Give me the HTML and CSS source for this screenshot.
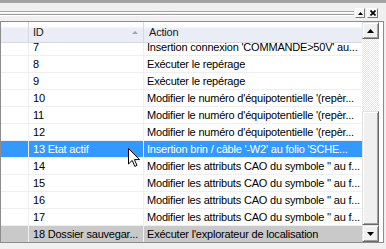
FILE: index.html
```html
<!DOCTYPE html>
<html lang="fr">

<head>
  <meta charset="UTF-8">
  <title>Historique</title>
  <link rel="stylesheet" href="styles.css">
</head>

<body>
  <div class="panel">
    <div class="topline"></div>
    <div class="toolbar">
      <div class="grip"></div>
      <span class="tbtn"><svg width="5" height="3" viewBox="0 0 5 3"><path d="M0 3h5L2.5 0z" fill="#000"/></svg></span>
      <span class="tbtn close"><svg width="6" height="6" viewBox="0 0 6 6"><path d="M0.5 0.5l5 5M5.5 0.5l-5 5" stroke="#000" stroke-width="1.6"/></svg></span>
    </div>
    <div class="list">
      <div class="grid">
        <div class="row head">
          <div class="c-num"></div>
          <div class="c-id">ID <svg class="sort" width="6" height="3" viewBox="0 0 6 3"><path d="M0 3h6L3 0z" fill="#9aa3b8"/></svg></div>
          <div class="c-action">Action</div>
        </div>
        <div class="body">
          <div class="rows">
            <div class="row"><div class="c-num"></div><div class="c-id">7</div><div class="c-action">Insertion connexion 'COMMANDE&gt;50V' au...</div></div>
            <div class="row"><div class="c-num"></div><div class="c-id">8</div><div class="c-action">Exécuter le repérage</div></div>
            <div class="row"><div class="c-num"></div><div class="c-id">9</div><div class="c-action">Exécuter le repérage</div></div>
            <div class="row"><div class="c-num"></div><div class="c-id">10</div><div class="c-action">Modifier le numéro d'équipotentielle '(repèr...</div></div>
            <div class="row"><div class="c-num"></div><div class="c-id">11</div><div class="c-action">Modifier le numéro d'équipotentielle '(repèr...</div></div>
            <div class="row"><div class="c-num"></div><div class="c-id">12</div><div class="c-action">Modifier le numéro d'équipotentielle '(repèr...</div></div>
            <div class="row sel"><div class="c-num"></div><div class="c-id">13 Etat actif</div><div class="c-action">Insertion brin / câble '-W2' au folio 'SCHE...</div></div>
            <div class="row"><div class="c-num"></div><div class="c-id">14</div><div class="c-action">Modifier les attributs CAO du symbole '' au f...</div></div>
            <div class="row"><div class="c-num"></div><div class="c-id">15</div><div class="c-action">Modifier les attributs CAO du symbole '' au f...</div></div>
            <div class="row"><div class="c-num"></div><div class="c-id">16</div><div class="c-action">Modifier les attributs CAO du symbole '' au f...</div></div>
            <div class="row"><div class="c-num"></div><div class="c-id">17</div><div class="c-action">Modifier les attributs CAO du symbole '' au f...</div></div>
            <div class="row saved"><div class="c-num"></div><div class="c-id">18 Dossier sauvegar...</div><div class="c-action">Exécuter l'explorateur de localisation</div></div>
          </div>
        </div>
      </div>
      <div class="vscroll">
        <div class="sbtn"><svg width="7" height="4" viewBox="0 0 7 4"><path d="M0 4h7L3.5 0z" fill="#000"/></svg></div>
        <div class="track"></div>
        <div class="thumb"></div>
        <div class="sbtn"><svg width="7" height="4" viewBox="0 0 7 4"><path d="M0 0h7L3.5 4z" fill="#000"/></svg></div>
      </div>
    </div>
    <!-- mouse pointer over the selected row -->
    <svg class="cursor" width="12" height="19" viewBox="0 0 12 19">
      <path d="M0.5 0.5v15.5l3.7-3.6 2.6 6 2.2-1-2.6-5.8h5.1z" fill="#fff" stroke="#000" stroke-width="1" stroke-linejoin="round"/>
    </svg>
  </div>
</body>

</html>
```

FILE: styles.css
```css
* {
  margin: 0;
  padding: 0;
  box-sizing: border-box;
}

body {
  background-color: #f0f0f0;
  font-family: "Liberation Sans", Arial, sans-serif;
  font-size: 11px;
  letter-spacing: -0.2px;
  color: #000;
}

.panel {
  position: relative;
  width: 386px;
  height: 249px;
  overflow: hidden;
}

.topline {
  height: 3px;
  background-color: #a3a3a3;
}

.toolbar {
  display: flex;
  align-items: flex-start;
  height: 18px;
  padding-right: 8px;
}

.grip {
  flex: 1;
  height: 5px;
  margin-top: 8px;
  margin-right: 1px;
  background: linear-gradient(#a0a0a0 0 1px, #fff 1px 2px, transparent 2px 3px, #a0a0a0 3px 4px, #fff 4px 5px);
}

.tbtn {
  display: flex;
  align-items: center;
  justify-content: center;
  width: 10px;
  height: 10px;
  margin-top: 5px;
  background-color: #f4f4f4;
  border: 1px solid;
  border-color: #fff #7a7a7a #7a7a7a #fff;
}

.tbtn.close {
  width: 11px;
  margin-left: 2px;
}

.list {
  display: flex;
  width: 384px;
  height: 222px;
  background-color: #fff;
  border: 1px solid #8c8c8c;
}

.grid {
  display: flex;
  flex-direction: column;
  width: 361px;
}

.row {
  display: flex;
  height: 17px;
  line-height: 16px;
  border-bottom: 1px solid #efefef;
  white-space: nowrap;
}

.c-num {
  width: 28px;
  border-right: 1px solid #efefef;
}

.c-id {
  width: 115px;
  padding-left: 4px;
  overflow: hidden;
  border-right: 1px solid #efefef;
}

.c-action {
  flex: 1;
  padding-left: 3px;
  overflow: hidden;
}

.row.head {
  height: 21px;
  line-height: 20px;
  color: #1a1a1a;
  border-bottom-color: #d8d8df;
  background: linear-gradient(#fff 0 4px, #eaecf6 7px);
}

.head .c-num,
.head .c-id {
  border-right-color: #d8d8df;
}

.head .c-id {
  display: flex;
  align-items: center;
  justify-content: space-between;
  padding-right: 5px;
}

.head .c-action {
  padding-left: 5px;
}

.body {
  flex: 1;
  overflow: hidden;
}

.rows {
  margin-top: -4px;
}

.row.sel {
  background-color: #3399ff;
  color: #fff;
}

.row.saved {
  background-color: #c9c9c9;
}

.vscroll {
  display: flex;
  flex-direction: column;
  width: 17px;
}

.sbtn,
.thumb {
  background-color: #f0f0f0;
  border: 1px solid;
  border-color: #e3e3e3 #696969 #696969 #e3e3e3;
  box-shadow: inset 1px 1px #fff, inset -1px -1px #a0a0a0;
}

.sbtn {
  display: flex;
  align-items: center;
  justify-content: center;
  height: 17px;
}

.track {
  height: 72px;
  background: repeating-conic-gradient(#fff 0 25%, #e6e6e6 0 50%) 0 0 / 2px 2px;
}

.thumb {
  height: 114px;
}

.cursor {
  position: absolute;
  left: 128px;
  top: 148px;
}
```
